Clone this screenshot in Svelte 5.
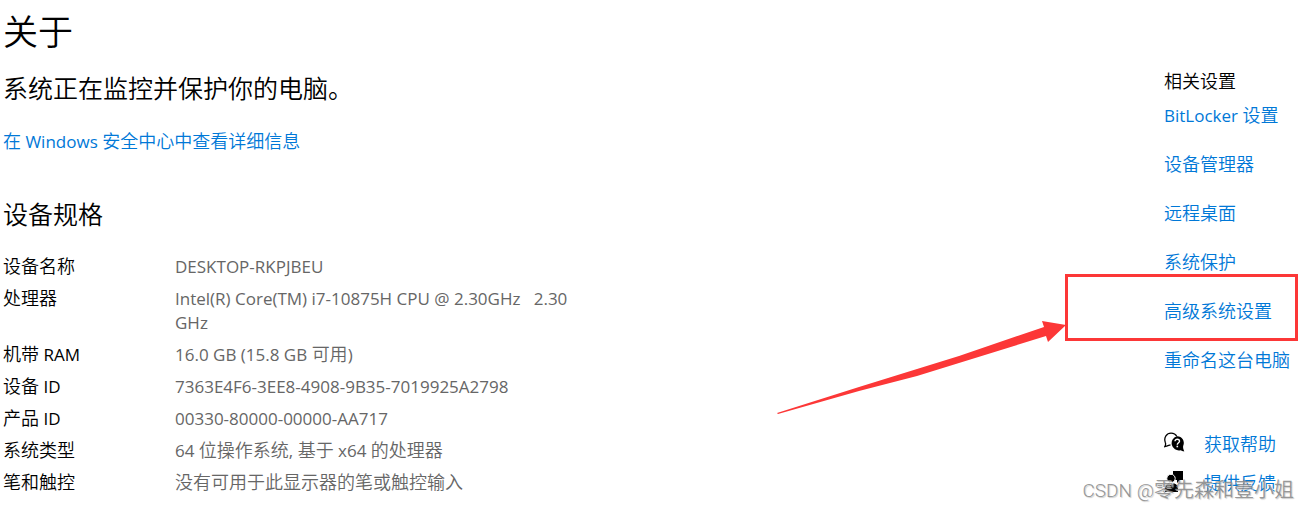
<script>
  const specs = [
    ['设备名称', 'DESKTOP-RKPJBEU'],
    ['处理器', 'Intel(R) Core(TM) i7-10875H CPU @ 2.30GHz\u00a0\u00a0 2.30 GHz'],
    ['机带 RAM', '16.0 GB (15.8 GB 可用)'],
    ['设备 ID', '7363E4F6-3EE8-4908-9B35-7019925A2798'],
    ['产品 ID', '00330-80000-00000-AA717'],
    ['系统类型', '64 位操作系统, 基于 x64 的处理器'],
    ['笔和触控', '没有可用于此显示器的笔或触控输入'],
  ];

  const related = [
    { label: 'BitLocker 设置' },
    { label: '设备管理器' },
    { label: '远程桌面' },
    { label: '系统保护' },
    { label: '高级系统设置', marked: true },
    { label: '重命名这台电脑' },
  ];

  // Splits a string into Latin and Chinese runs so each gets its own size.
  const runs = (text) =>
    text.match(/[\u4e00-\u9fff]+|[^\u4e00-\u9fff]+/g).map((t) => ({ t, cjk: /[\u4e00-\u9fff]/.test(t) }));
</script>

{#snippet mixed(text)}{#each runs(text) as run}{#if run.cjk}{run.t}{:else}<span class="latin">{run.t}</span>{/if}{/each}{/snippet}

<div class="page">
  <main>
    <h1>关于</h1>
    <p class="status">系统正在监控并保护你的电脑。</p>
    <a class="security" href="#security">{@render mixed('在 Windows 安全中心中查看详细信息')}</a>

    <h2>设备规格</h2>
    <table>
      <tbody>
        {#each specs as [name, value]}
          <tr>
            <th scope="row">{@render mixed(name)}</th>
            <td>{@render mixed(value)}</td>
          </tr>
        {/each}
      </tbody>
    </table>
  </main>

  <aside>
    <h3>相关设置</h3>
    <ul class="related">
      {#each related as item}
        <li>
          <a href="#related">{@render mixed(item.label)}</a>
          {#if item.marked}
            <span class="frame"></span>
            <svg class="arrow" viewBox="0 0 290 94" aria-hidden="true">
              <path d="M0 93 L82 67 L140 49 L182 36 L267 7 L265 1 L289 5 L271 22 L269 16 L182 43 L140 56 L82 71 L1 94 Z" fill="#fc3737" />
            </svg>
          {/if}
        </li>
      {/each}
    </ul>
    <ul class="support">
      <li>
        <svg viewBox="0 0 22 22" aria-hidden="true">
          <path d="M6.5 12.8 C5 13.2 3.5 14 .8 14.6 C1.7 13 1.9 11.8 1.3 10.4 C-.5 5.5 2.8 1.2 7 1.2 C9.8 1.2 11.8 2.5 12.8 4.5" fill="none" stroke="#000" stroke-width="1.3" />
          <path d="M13.3 4.2 a6.8 6.8 0 0 1 6 9.4 c-.5 1.6-.2 3.2 1 5.9 c-1.7-.2-2.8-.7-3.9-1.2 a6.8 6.8 0 1 1-3.1-14.1z" />
          <path d="M11 9.3 c0-2.7 4.5-2.6 4.5 0 c0 1.5-2.2 1.5-2.2 3.4" fill="none" stroke="#fff" stroke-width="1.4" />
          <rect x="12.5" y="13.7" width="1.6" height="1.6" fill="#fff" />
        </svg>
        <a href="#help">获取帮助</a>
      </li>
      <li>
        <svg viewBox="0 0 22 22" aria-hidden="true">
          <path d="M9 0h10v9h-3l-3 3v-3h-4z" />
          <circle cx="7" cy="7.5" r="4.2" stroke="#fff" stroke-width="1" />
          <path d="M1 21v-3.5c0-2.700 1.700-5 4-5l2 1.500 2.500-1.500c2.500 0 4.500 2.300 4.500 5v3.500z" />
        </svg>
        <a href="#feedback">提供反馈</a>
      </li>
    </ul>
  </aside>

  <div class="watermark"><span>CSDN @</span>零先森和壹小姐</div>
</div>

<style>
  :global(body) {
    margin: 0;
    background: #fff;
  }

  .page {
    position: relative;
    display: flex;
    min-height: 509px;
    box-sizing: border-box;
    overflow: hidden;
    color: #000;
    font: 350 18px/24px 'Noto Sans CJK SC', sans-serif;
  }

  .latin {
    font-family: 'Open Sans', 'Noto Sans CJK SC', sans-serif;
    font-size: 17px;
    font-weight: 400;
    line-height: 1;
  }

  main {
    flex: 1;
    padding: 6px 0 0 3px;
  }

  h1,
  h2,
  h3,
  p,
  ul {
    margin: 0;
    padding: 0;
    font-weight: inherit;
    list-style: none;
  }

  h1 {
    font-size: 35px;
    line-height: 48px;
  }

  .status {
    margin-top: 17px;
    font-size: 25px;
    line-height: 32px;
  }

  a {
    color: #0078d7;
    text-decoration: none;
  }

  .security {
    display: block;
    margin-top: 25px;
  }

  h2 {
    margin-top: 45px;
    font-size: 25px;
    line-height: 32px;
  }

  table {
    margin-top: 20px;
    border-collapse: collapse;
  }

  th,
  td {
    padding: 4px 0;
    font-weight: inherit;
    text-align: left;
    vertical-align: top;
  }

  th {
    width: 172px;
  }

  td {
    max-width: 400px;
    color: #666;
  }

  aside {
    width: 145px;
    padding-top: 68px;
  }

  h3 {
    font-size: inherit;
  }

  .related {
    display: grid;
    gap: 25px;
    margin-top: 10px;
  }

  .related li {
    position: relative;
  }

  .frame {
    position: absolute;
    inset: -24px 11px -19px -99px;
    border: 3px solid #fc3737;
    pointer-events: none;
  }

  .arrow {
    position: absolute;
    top: 22px;
    right: 242px;
    width: 290px;
    height: 94px;
    pointer-events: none;
  }

  .support {
    display: grid;
    gap: 15px;
    margin-top: 60px;
  }

  .support li {
    display: flex;
    align-items: center;
    gap: 18px;
  }

  .support svg {
    width: 22px;
    height: 22px;
  }

  .watermark {
    position: absolute;
    right: 15px;
    bottom: 8px;
    color: #888d;
    font-size: 20px;
    text-shadow: 1px 1px 1px #ccc;
    pointer-events: none;
  }

  .watermark span {
    font-family: Roboto, sans-serif;
    font-size: 19px;
    line-height: 1;
  }
</style>
